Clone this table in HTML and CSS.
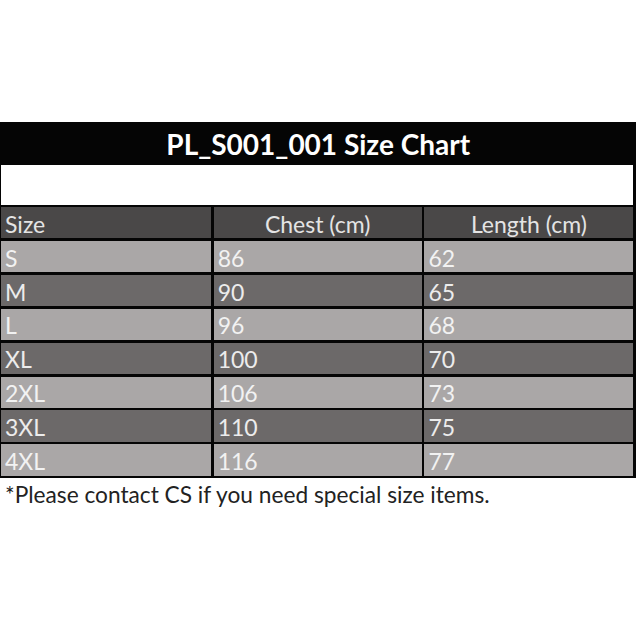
FILE: index.html
```html
<!DOCTYPE html>
<html>
<head>
<meta charset="utf-8">
<link rel="stylesheet" href="styles.css">
</head>
<body>
<div class="page">
  <div class="chart">
    <div class="title">PL_S001_001 Size Chart</div>
    <div class="blank"></div>
    <div class="cell head">Size</div>
    <div class="cell head center">Chest (cm)</div>
    <div class="cell head center">Length (cm)</div>
    <div class="cell light">S</div><div class="cell light">86</div><div class="cell light">62</div>
    <div class="cell dark">M</div><div class="cell dark">90</div><div class="cell dark">65</div>
    <div class="cell light">L</div><div class="cell light">96</div><div class="cell light">68</div>
    <div class="cell dark">XL</div><div class="cell dark">100</div><div class="cell dark">70</div>
    <div class="cell light">2XL</div><div class="cell light">106</div><div class="cell light">73</div>
    <div class="cell dark">3XL</div><div class="cell dark">110</div><div class="cell dark">75</div>
    <div class="cell light">4XL</div><div class="cell light">116</div><div class="cell light">77</div>
  </div>
  <p class="note">*Please contact CS if you need special size items.</p>
</div>
</body>
</html>
```
FILE: styles.css
```css
html, body {
  margin: 0;
  padding: 0;
  background: #ffffff;
}
.page {
  width: 637px;
  height: 637px;
  padding-top: 122px;
  box-sizing: border-box;
  font-family: Lato, "Liberation Sans", sans-serif;
}
.chart {
  width: 636px;
  box-sizing: border-box;
  display: grid;
  grid-template-columns: 210px 208px 209px;
  grid-template-rows: 40px 40px 31px repeat(7, 31.2px);
  column-gap: 2.7px;
  row-gap: 2.7px;
  background: #050505;
  padding: 0 3px 2.7px 1px;
}
.title {
  grid-column: 1 / -1;
  margin: 0 -3px 0 -1px;
  color: #ffffff;
  font-weight: 700;
  font-size: 28px;
  display: flex;
  align-items: center;
  justify-content: center;
  padding-top: 3px;
}
.blank {
  grid-column: 1 / -1;
  background: #ffffff;
}
.cell {
  display: flex;
  align-items: center;
  padding-left: 4px;
  padding-top: 2px;
  font-size: 23px;
  color: #f2f2f2;
}
.center {
  justify-content: center;
  padding-left: 0;
}
.head {
  background: #4a4848;
  color: #e4e4e4;
}
.light {
  background: #aaa7a7;
}
.dark {
  background: #6c6969;
  color: #ececec;
}
.note {
  margin: 3px 0 0 5px;
  font-size: 22.7px;
  line-height: 28px;
  color: #222222;
}
```
